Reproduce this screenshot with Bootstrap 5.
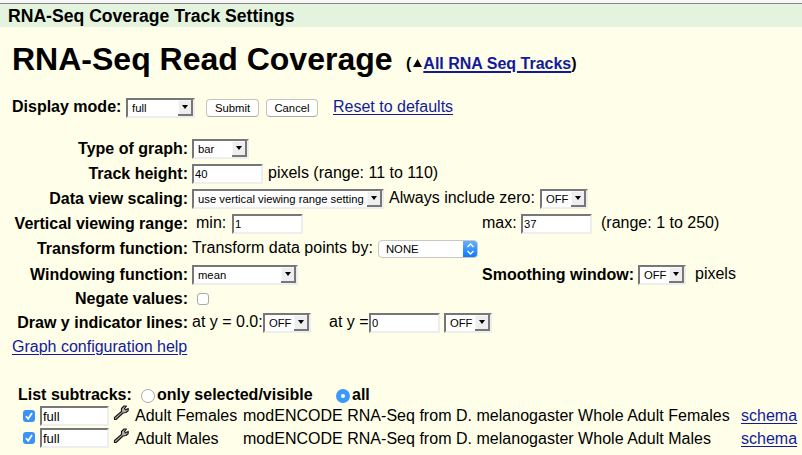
<!DOCTYPE html>
<html lang="en">
<head>
<meta charset="utf-8">
<title>RNA-Seq Coverage Track Settings</title>
<link href="https://cdn.jsdelivr.net/npm/bootstrap@5.3.0/dist/css/bootstrap.min.css" rel="stylesheet">
<style>
body{background:#fffee8;color:#000;font:16px/24px "Liberation Sans",Arial,sans-serif;width:802px;height:455px;overflow:hidden;white-space:nowrap}
a{color:#121a9c;text-decoration:underline;text-underline-offset:2px;text-decoration-thickness:1px}
.section-bar{height:24px;border-top:1px solid #858585;background:#e4f3de;padding-left:8px;line-height:25px;font-size:17.6px;font-weight:700}
.top-edge{height:3px;background:#f8f8f8}
.page-title{font-size:32px;line-height:40px;font-weight:700;margin:0;width:394px}
.title-row{height:68px;padding:12px 0 0 12px}
.parent-track{font-weight:700;line-height:24px;margin-top:13px}
.parent-track a{text-decoration-thickness:2px}
.mode-row{height:42px;padding-left:12px}
.mode-row .combo{margin-top:3px}
.setting{height:25px}
.setting>b{width:188px;text-align:right;margin-right:4px}
.setting>span:not(.combo):not(.mac-combo){margin-top:-1px}
.short{height:24px}.tall{height:26px}
.combo,.field{border:2px solid;border-color:#777 #eee #eee #777;background:#fff;height:20px;margin-top:2px;border-radius:0}
.combo select,.mac-combo select{appearance:none;border:0;outline:0;background:transparent;padding:0 0 0 4px;font:11.25px/16px "Liberation Sans",Arial,sans-serif;color:#000;flex:1;min-width:0;height:16px}
.arrow{width:15px;height:16px;background:#eee;border:solid #777;border-width:0 2px 2px 0;box-shadow:inset 1px 1px #f8f8f8}
.arrow::after{content:"";border:solid transparent;border-width:4px 3px 0;border-top-color:#000}
.field{width:71px;padding:1px;font:11.25px/14px "Liberation Sans",Arial,sans-serif;color:#000;outline:0}
.w48{width:48px}.w57{width:57px}.w69{width:69px}.w106{width:106px}.w192{width:192px}
.push-btn{height:18px;margin-top:4px;padding:0;border:1px solid #c4c4bd;border-bottom-color:#aaa;border-radius:4px;background:#fff;color:#000;font-size:11.3px;line-height:16px}
.mac-combo{width:100px;height:18px;margin-top:3px;border:1px solid #c8c8c0;border-radius:4px;background:#fff;overflow:hidden}
.mac-combo select{padding-left:7px}
.stepper{width:15px;margin:-1px;background:linear-gradient(#6cb3fa,#0a78fb)}
input.tick{appearance:none;width:12px;height:12px;border:1px solid #aaa;border-radius:3px;background:#fff;margin:0}
.checked-box{width:12px;height:12px;border-radius:3px;background:#3b93f8}
.dot{width:14px;height:14px;border:1px solid #aaa;border-radius:50%;background:#fff;margin-top:6px}
.dot.on{border:5px solid #3b99fc}
.list-row{height:21px;padding-left:18px}
.subtrack{height:23px;padding-left:23px}
.subtrack .field{width:69px;font-size:13px;margin:2px 0 0 5px}
.subtrack .checked-box{margin-top:6px}
.subtrack .wrench{margin:1px 0 0 4px}
.subtrack+.subtrack .field{margin-top:1px}
.subtrack+.subtrack .checked-box{margin-top:5px}
.name-col{width:108px;margin-left:6px}
.desc-col{width:498px;letter-spacing:.02px}
</style>
<script src="https://cdn.jsdelivr.net/npm/bootstrap@5.3.0/dist/js/bootstrap.bundle.min.js"></script>
</head>
<body>
<svg width="0" height="0" class="d-none">
<symbol id="wrench" viewBox="0 0 16 16"><path d="M1.500 12.500 8.500 6.500 8.500 3.500 11 1 13.500 1 11.500 3.500 12.500 4.800 15.200 3.500 15.200 5.500 13 7.500 10 8 3 14.500 1.500 14.500Z" fill="#b4b4b4" stroke="#1a1a1a" stroke-width="1.200" stroke-linejoin="round"/></symbol>
<symbol id="tick" viewBox="0 0 12 12"><path d="M3 6.300 5.200 8.800 9 3" fill="none" stroke="#fff" stroke-width="1.700"/></symbol>
</svg>
<div class="top-edge"></div>
<header class="section-bar">RNA-Seq Coverage Track Settings</header>
<main>
<div class="title-row d-flex align-items-start">
<h1 class="page-title">RNA-Seq Read Coverage</h1>
<div class="parent-track d-flex">(<svg width="12" height="24" viewBox="0 0 12 24"><path d="M2 15h9L6.500 7z"/></svg><a href="#">All RNA Seq Tracks</a>)</div>
</div>
<div class="mode-row d-flex align-items-start">
<b style="width:114px">Display mode:</b>
<span class="combo w69 d-flex"><select><option>full</option></select><span class="arrow d-flex align-items-center justify-content-center"></span></span>
<button class="push-btn" style="width:53px;margin-left:11px">Submit</button>
<button class="push-btn" style="width:52px;margin-left:7px">Cancel</button>
<a href="#" style="margin-left:15px">Reset to defaults</a>
</div>
<div class="setting d-flex align-items-start"><b>Type of graph:</b><span class="combo w57 d-flex"><select><option>bar</option></select><span class="arrow d-flex align-items-center justify-content-center"></span></span></div>
<div class="setting d-flex align-items-start"><b>Track height:</b><input class="field" value="40"><span style="margin-left:5px">pixels (range: 11 to 110)</span></div>
<div class="setting d-flex align-items-start"><b>Data view scaling:</b><span class="combo w192 d-flex"><select><option>use vertical viewing range setting</option></select><span class="arrow d-flex align-items-center justify-content-center"></span></span><span style="margin-left:5px;width:151px">Always include zero:</span><span class="combo w48 d-flex"><select><option>OFF</option></select><span class="arrow d-flex align-items-center justify-content-center"></span></span></div>
<div class="setting d-flex align-items-start"><b>Vertical viewing range:</b><span style="width:36px;margin-left:4px">min:</span><input class="field" value="1"><span style="width:39px;margin-left:179px">max:</span><input class="field" value="37"><span style="margin-left:9px">(range: 1 to 250)</span></div>
<div class="setting tall d-flex align-items-start"><b>Transform function:</b><span style="width:186px">Transform data points by:</span><span class="mac-combo d-flex"><select><option>NONE</option></select><span class="stepper"><svg class="d-block" width="15" height="18" viewBox="0 0 15 18" fill="none" stroke="#fff" stroke-width="1.300"><path d="m4.500 7 3-3 3 3M4.500 11l3 3 3-3"/></svg></span></span></div>
<div class="setting short d-flex align-items-start"><b>Windowing function:</b><span class="combo w106 d-flex"><select><option>mean</option></select><span class="arrow d-flex align-items-center justify-content-center"></span></span><strong style="width:156px;margin-left:184px">Smoothing window:</strong><span class="combo w48 d-flex"><select><option>OFF</option></select><span class="arrow d-flex align-items-center justify-content-center"></span></span><span style="margin-left:9px">pixels</span></div>
<div class="setting short d-flex align-items-start"><b>Negate values:</b><input type="checkbox" class="tick" style="margin:6px 0 0 5px"></div>
<div class="setting short d-flex align-items-start"><b>Draw y indicator lines:</b><span style="width:71px">at y = 0.0:</span><span class="combo w48 d-flex"><select><option>OFF</option></select><span class="arrow d-flex align-items-center justify-content-center"></span></span><span style="width:40px;margin-left:18px">at y =</span><input class="field" value="0"><span class="combo w48 d-flex" style="margin-left:4px"><select><option>OFF</option></select><span class="arrow d-flex align-items-center justify-content-center"></span></span></div>
<div style="height:48px;padding-left:12px"><a href="#">Graph configuration help</a></div>
<div class="list-row d-flex align-items-start"><b style="width:123px">List subtracks:</b><span class="dot"></span><b style="margin-left:2px;width:179px">only selected/visible</b><span class="dot on"></span><b style="margin-left:2px">all</b></div>
<div class="subtrack d-flex align-items-start"><span class="checked-box"><svg class="d-block" width="12" height="12"><use href="#tick"/></svg></span><input class="field" value="full"><svg class="wrench" width="16" height="16"><use href="#wrench"/></svg><span class="name-col">Adult Females</span><span class="desc-col">modENCODE RNA-Seq from D. melanogaster Whole Adult Females</span><a href="#">schema</a></div>
<div class="subtrack d-flex align-items-start"><span class="checked-box"><svg class="d-block" width="12" height="12"><use href="#tick"/></svg></span><input class="field" value="full"><svg class="wrench" width="16" height="16"><use href="#wrench"/></svg><span class="name-col">Adult Males</span><span class="desc-col">modENCODE RNA-Seq from D. melanogaster Whole Adult Males</span><a href="#">schema</a></div>
</main>
</body>
</html>
